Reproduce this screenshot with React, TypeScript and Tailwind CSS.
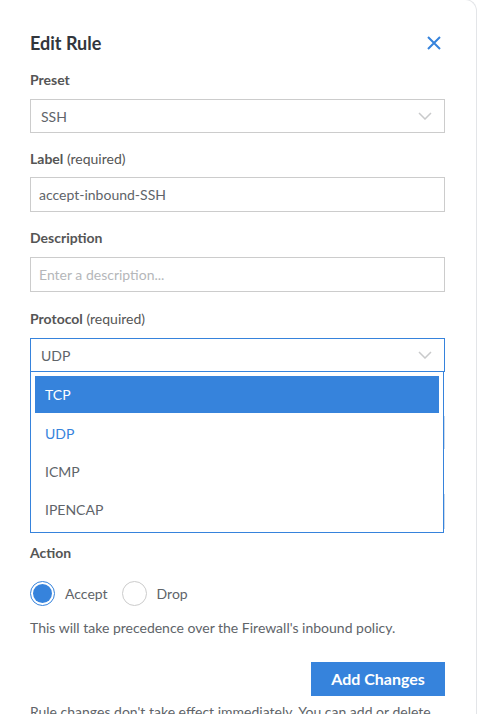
import { useState } from "react";

const font = { fontFamily: "Lato, 'Open Sans', sans-serif" };

function Chevron() {
  return (
    <svg width="14" height="8" viewBox="0 0 14 8" fill="none" className="absolute right-[12px] top-1/2 -translate-y-1/2">
      <path d="M1 1l6 6 6-6" stroke="#c9cacb" strokeWidth="1.5" />
    </svg>
  );
}

function FieldLabel({ children, extra }: { children?: string; extra?: string }) {
  return (
    <div className="h-[18px] leading-[18px] text-[14px] text-[#555] font-bold">
      {children}
      {extra && <span className="font-normal"> {extra}</span>}
    </div>
  );
}

export default function App() {
  const [action, setAction] = useState("accept");
  const options = ["TCP", "UDP", "ICMP", "IPENCAP"];

  return (
    <div style={font} className="-mt-px min-h-[715px] w-[477px] bg-white border-t border-r border-[#e3e5e8] rounded-tr-[12px] overflow-hidden">
      <div className="pl-[30px] pr-[31px] pt-[31px]">
        {/* Header */}
        <div className="flex items-center justify-between h-[24px]">
          <h2 className="text-[18px] font-bold text-[#32363c] leading-[24px]">Edit Rule</h2>
          <button className="mr-[4px] text-[#3683dc]">
            <svg width="14" height="14" viewBox="0 0 14 14" fill="none">
              <path d="M1 1l12 12M13 1L1 13" stroke="currentColor" strokeWidth="2" />
            </svg>
          </button>
        </div>

        {/* Preset */}
        <div className="mt-[16px]">
          <FieldLabel>Preset</FieldLabel>
          <div className="relative mt-[10px] h-[34px] border border-[#ccc] flex items-center pl-[10px] text-[14px] text-[#606469]">
            SSH
            <Chevron />
          </div>
        </div>

        {/* Label */}
        <div className="mt-[17px]">
          <FieldLabel extra="(required)">Label</FieldLabel>
          <div className="mt-[9px] h-[35px] border border-[#ccc] flex items-center pl-[8px] text-[14px] text-[#606469]">
            accept-inbound-SSH
          </div>
        </div>

        {/* Description */}
        <div className="mt-[17px]">
          <FieldLabel>Description</FieldLabel>
          <div className="mt-[10px] h-[35px] border border-[#ccc] flex items-center pl-[8px] text-[14px] text-[#b5b7ba]">
            Enter a description...
          </div>
        </div>

        {/* Protocol */}
        <div className="mt-[18px]">
          <FieldLabel extra="(required)">Protocol</FieldLabel>
          <div className="relative mt-[10px]">
            <div className="relative h-[34px] border border-[#3683dc] flex items-center pl-[10px] text-[14px] text-[#606469]">
              UDP
              <Chevron />
            </div>
            <div className="absolute z-10 left-0 top-[33px] w-[414px] bg-white border border-[#3683dc] py-[4px]">
              {options.map((o) => (
                <div
                  key={o}
                  className={
                    o === "TCP"
                      ? "mx-[4px] h-[37px] mb-[1px] flex items-center pl-[10px] text-[14px] bg-[#3683dc] text-white"
                      : o === "UDP"
                      ? "mx-[4px] h-[38px] flex items-center pl-[10px] text-[14px] text-[#3683dc]"
                      : "mx-[4px] h-[38px] flex items-center pl-[10px] text-[14px] text-[#606469]"
                  }
                >
                  {o}
                </div>
              ))}
            </div>
          </div>
        </div>

        {/* fields covered by the open menu */}
        <div className="mt-[18px]">
          <FieldLabel />
          <div className="mt-[8px] h-[33px] border border-[#c9d9ec]" />
        </div>
        <div className="mt-[18px]">
          <FieldLabel />
          <div className="mt-[9px] h-[35px] border border-[#c9d9ec]" />
        </div>

        {/* Action */}
        <div className="mt-[15px]">
          <FieldLabel>Action</FieldLabel>
          <div className="mt-[18px] flex items-center h-[26px] text-[14px] text-[#606469]">
            <button onClick={() => setAction("accept")} className="flex items-center">
              <span
                className={
                  action === "accept"
                    ? "w-[25px] h-[25px] rounded-full border border-[#3683dc] flex items-center justify-center"
                    : "w-[25px] h-[25px] rounded-full border border-[#ccc]"
                }
              >
                {action === "accept" && <span className="w-[19px] h-[19px] rounded-full bg-[#3683dc]" />}
              </span>
              <span className="ml-[10px]">Accept</span>
            </button>
            <button onClick={() => setAction("drop")} className="ml-[14px] flex items-center">
              <span
                className={
                  action === "drop"
                    ? "w-[25px] h-[25px] rounded-full border border-[#3683dc] flex items-center justify-center"
                    : "w-[25px] h-[25px] rounded-full border border-[#ccc]"
                }
              >
                {action === "drop" && <span className="w-[19px] h-[19px] rounded-full bg-[#3683dc]" />}
              </span>
              <span className="ml-[10px]">Drop</span>
            </button>
          </div>
          <p className="mt-[12px] leading-[20px] text-[14px] text-[#606469]">
            This will take precedence over the Firewall's inbound policy.
          </p>
        </div>

        <div className="mt-[24px] flex justify-end">
          <button className="h-[34px] w-[134px] bg-[#3683dc] text-white font-bold text-[16px]">Add Changes</button>
        </div>

        <p className="mt-[6px] leading-[20px] text-[14px] text-[#606469] whitespace-nowrap">
          Rule changes don't take effect immediately. You can add or delete
        </p>
      </div>
    </div>
  );
}
